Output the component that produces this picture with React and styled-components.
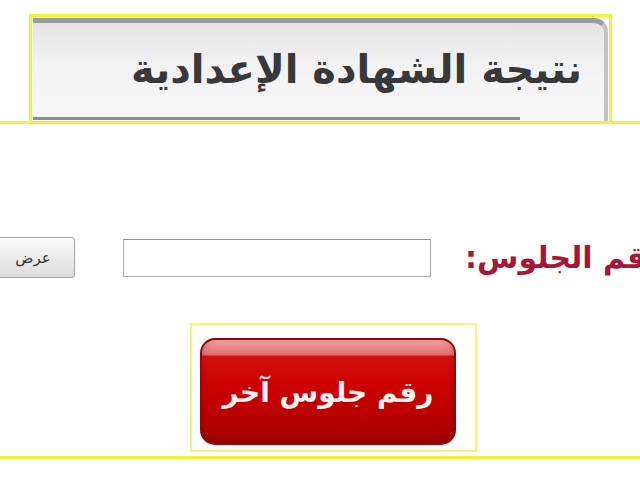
import React from 'react'
import styled, { createGlobalStyle } from 'styled-components'

const GlobalStyle = createGlobalStyle`
  html, body {
    margin: 0;
    padding: 0;
    background: #ffffff;
  }
  body {
    font-family: "DejaVu Sans", "Noto Sans", sans-serif;
  }
`

const Page = styled.div`
  width: 640px;
  height: 480px;
  overflow: hidden;
  background: #fff;
  padding-top: 14px;
  box-sizing: border-box;
`

const HeaderFrame = styled.div`
  margin-left: 29px;
  width: 583px;
  height: 107px;
  box-sizing: border-box;
  border: 3px solid #f2f23a;
  border-bottom: none;
  padding: 1px 1px 0 1px;
`

const Panel = styled.div`
  height: 100%;
  box-sizing: border-box;
  display: flex;
  flex-direction: column;
  justify-content: space-between;
  background: linear-gradient(#e4e4e6, #f2f2f3 40%, #f8f8f8);
  border-top: 5px solid #9c9c9e;
  border-right: 4px solid #c2c2c4;
  border-top-right-radius: 14px;
`

const Title = styled.h1`
  margin: 0;
  padding: 20px 22px 0 0;
  direction: rtl;
  text-align: right;
  font-family: "DejaVu Sans", sans-serif;
  font-weight: bold;
  font-size: 40px;
  line-height: 52px;
  color: #38383a;
`

const BottomRule = styled.div`
  width: 487px;
  height: 3px;
  background: #8e8e90;
  margin-bottom: 1px;
`

const BigFrame = styled.div`
  margin: 0 -20px;
  height: 338px;
  box-sizing: border-box;
  border: 3px solid #f2f23a;
  padding-top: 113px;
`

const Row = styled.div`
  display: flex;
  align-items: center;
  height: 41px;
  & > * {
    flex-shrink: 0;
  }
`

const ShowButton = styled.button`
  margin-left: 2px;
  width: 90px;
  height: 41px;
  box-sizing: border-box;
  border: 1px solid #a4a4a4;
  border-radius: 3px;
  background: linear-gradient(#fbfbfb, #e9e9e9 60%, #dcdcdc);
  font-family: "DejaVu Sans", sans-serif;
  font-size: 15px;
  color: #333;
  padding: 0 0 0 6px;
`

const SeatInput = styled.input`
  margin-left: 48px;
  width: 308px;
  height: 38px;
  box-sizing: border-box;
  border: 1px solid #a9a9a9;
  border-top-color: #8f8f8f;
  background: #fff;
  outline: none;
`

const Label = styled.span`
  margin-left: 34px;
  direction: rtl;
  white-space: nowrap;
  font-family: "DejaVu Sans", sans-serif;
  font-weight: bold;
  font-size: 30px;
  color: #a8153a;
`

const ButtonFrame = styled.div`
  margin: 45px 0 0 207px;
  width: 287px;
  height: 129px;
  box-sizing: border-box;
  border: 2px solid #f4f47a;
  padding: 13px 19px 5px 8px;
`

const RedButton = styled.button`
  width: 100%;
  height: 100%;
  box-sizing: border-box;
  border: 2px solid #8e0a0a;
  border-radius: 15px;
  background: linear-gradient(
    #f0a0a0 0%,
    #e27070 14%,
    #d31010 16%,
    #cc0000 45%,
    #a80000 100%
  );
  box-shadow: inset 0 -3px 6px rgba(90, 0, 0, 0.35);
  font-family: "DejaVu Sans", sans-serif;
  font-weight: bold;
  font-size: 28px;
  white-space: nowrap;
  color: #fff2f2;
  direction: rtl;
  padding: 2px 0 0 0;
`

export default function App() {
  return (
    <Page>
      <GlobalStyle />
      <HeaderFrame>
        <Panel>
          <Title>نتيجة الشهادة الإعدادية</Title>
          <BottomRule />
        </Panel>
      </HeaderFrame>
      <BigFrame>
        <Row>
          <ShowButton>عرض</ShowButton>
          <SeatInput type="text" />
          <Label>رقم الجلوس:</Label>
        </Row>
        <ButtonFrame>
          <RedButton>رقم جلوس آخر</RedButton>
        </ButtonFrame>
      </BigFrame>
    </Page>
  )
}
